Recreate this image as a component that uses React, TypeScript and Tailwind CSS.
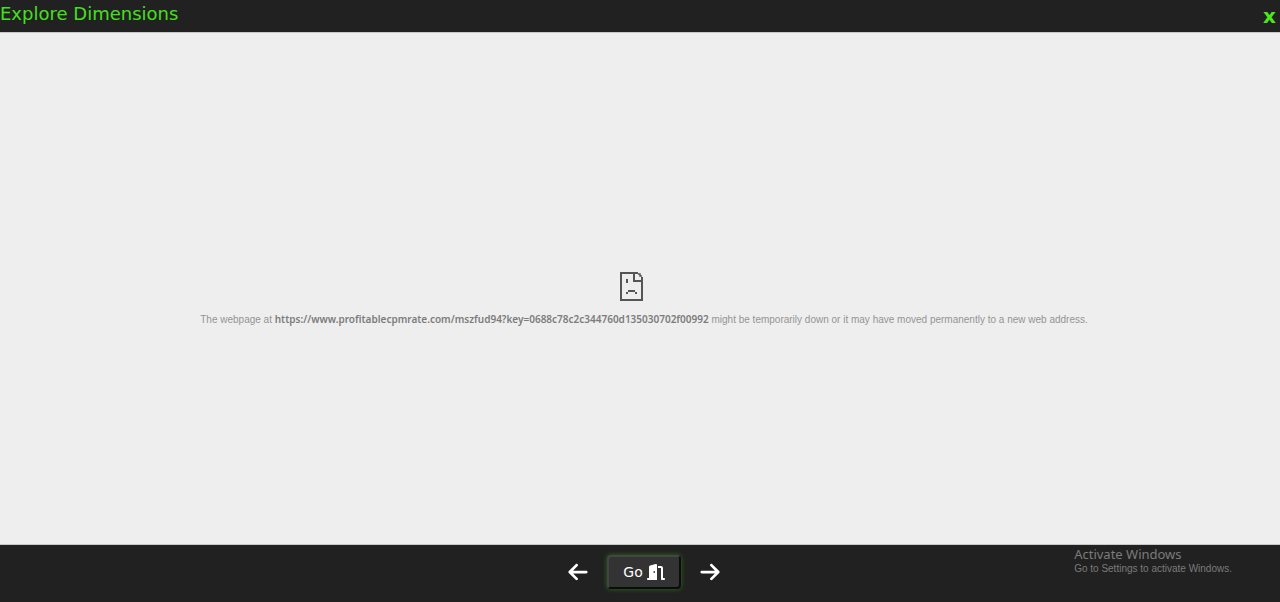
import { useState } from 'react'
import { FaArrowLeft, FaArrowRight, FaDoorOpen } from 'react-icons/fa6'

const SITES = ['https://www.profitablecpmrate.com/mszfud94?key=0688c78c2c344760d135030702f00992']

function SadPageIcon() {
    return (
        <svg viewBox="0 0 23 29" className="h-[29px] w-[23px]" fill="none" stroke="#555" strokeWidth="2" aria-hidden="true">
            <path d="M18 1H1v27h21V5" />
            <path d="M14 0v9h8" />
            <path d="M18 2h2v2h2" strokeWidth="1.5" />
            <path d="M7 7v4" />
            <path d="M6 21h2M8 19h7M15 21h2" />
        </svg>
    )
}

export default function App() {
    const [index, setIndex] = useState(0)

    const move = (step: number) => {
        setIndex((index + step + SITES.length) % SITES.length)
    }

    return (
        <div className="flex h-screen flex-col bg-[#212121] font-['DejaVu_Sans',sans-serif]">
            {/* Title bar */}
            <header className="flex h-8 shrink-0 items-start justify-between">
                <h1 className="pt-0.5 text-lg leading-6 text-[#45e01c]">Explore Dimensions</h1>
                <button aria-label="Close" className="px-1 pt-1 text-xl leading-6 font-bold text-[#4ae81c]">
                    x
                </button>
            </header>

            {/* Page view */}
            <main className="flex flex-1 flex-col items-center justify-center border-y border-[#c8c8c8] bg-[#eeeeee] pt-8 pl-2">
                <div className="pr-[26px]">
                    <SadPageIcon />
                </div>
                <p className="pt-2 pb-2 text-center font-['Liberation_Sans',sans-serif] text-[10px] leading-5 text-[#949494]">
                    The webpage at <strong className="font-['Noto_Sans',sans-serif] font-semibold text-[#7c7c7c]">{SITES[index]}</strong> might be temporarily down or it may have moved permanently to a new web address.
                </p>
            </main>

            {/* Controls */}
            <footer className="grid h-[57px] shrink-0 grid-cols-[1fr_auto_1fr] items-center pl-2 text-white">
                <span />
                <div className="flex items-center gap-4 pb-1">
                    <button aria-label="Previous" onClick={() => move(-1)} className="p-0.5">
                        <FaArrowLeft className="size-[22px]" />
                    </button>
                    <button className="flex h-[34px] w-[74px] items-center justify-center gap-1 rounded border-2 border-t-[#444] border-r-[#0c0c0c] border-b-[#0c0c0c] border-l-[#444] bg-[#333] text-sm shadow-[0_0_5px_#2f6b1c]">
                        Go
                        <FaDoorOpen className="size-[18px]" />
                    </button>
                    <button aria-label="Next" onClick={() => move(1)} className="p-0.5">
                        <FaArrowRight className="size-[22px]" />
                    </button>
                </div>
                <aside className="h-full justify-self-end pr-12 text-[#7b7b7b]">
                    <p className="font-['Noto_Sans',sans-serif] text-[13px] leading-[18px]">Activate Windows</p>
                    <p className="font-['Liberation_Sans',sans-serif] text-[10px] leading-3">Go to Settings to activate Windows.</p>
                </aside>
            </footer>
        </div>
    )
}
